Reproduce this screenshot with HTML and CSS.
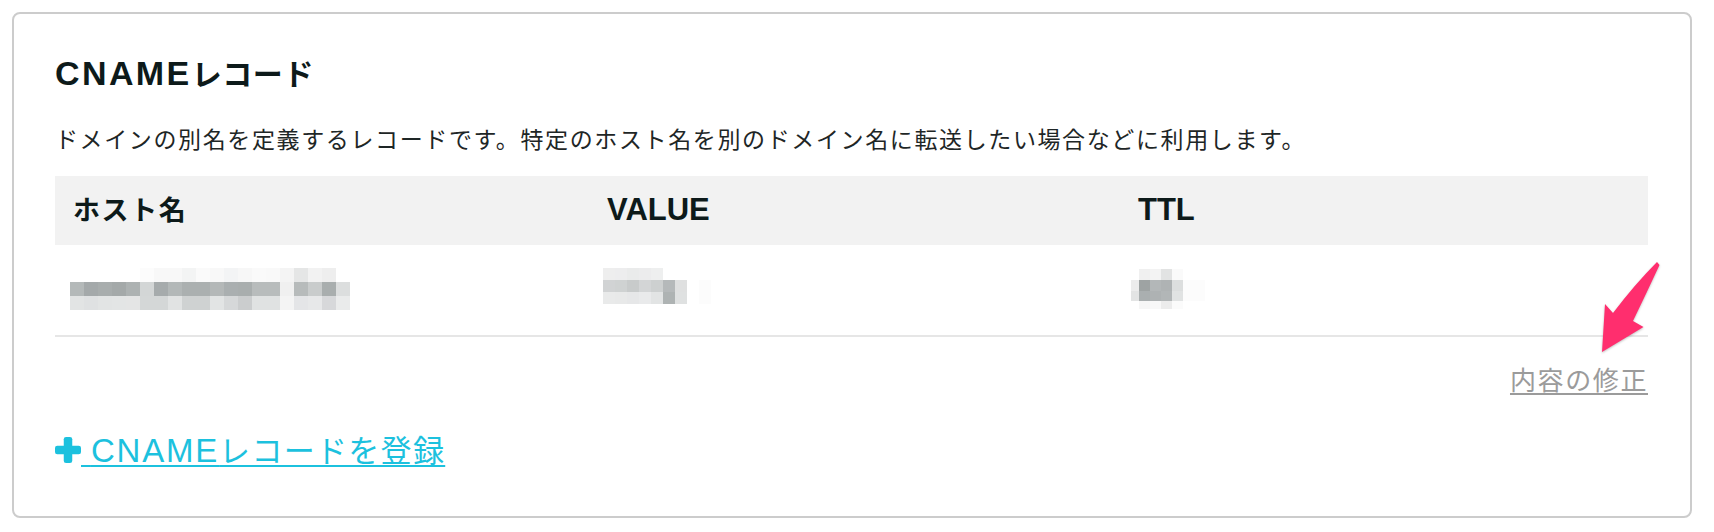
FILE: index.html
```html
<!DOCTYPE html>
<html lang="ja">
<head>
<meta charset="utf-8">
<title>CNAMEレコード</title>
<link rel="stylesheet" href="styles.css">
</head>
<body>
<div class="page">
  <section class="card">
    <h2 class="title"><span class="lat">CNAME</span>レコード</h2>
    <p class="desc">ドメインの別名を定義するレコードです。特定のホスト名を別のドメイン名に転送したい場合などに利用します。</p>

    <div class="table">
      <div class="row head">
        <div class="cell">ホスト名</div>
        <div class="cell"><span class="lat">VALUE</span></div>
        <div class="cell"><span class="lat">TTL</span></div>
      </div>
      <div class="row body">
        <div class="cell">
          <svg class="mosaic" width="290" height="44" viewBox="0 0 290 44">
            <g>
              <rect x="74" y="1" width="14" height="14" fill="#fcfcfc"/>
              <rect x="88" y="1" width="14" height="14" fill="#f8f8f8"/>
              <rect x="102" y="1" width="14" height="14" fill="#f8f8f8"/>
              <rect x="116" y="1" width="14" height="14" fill="#f3f4f4"/>
              <rect x="130" y="1" width="14" height="14" fill="#fafafa"/>
              <rect x="144" y="1" width="14" height="14" fill="#f8f8f8"/>
              <rect x="158" y="1" width="14" height="14" fill="#f3f4f5"/>
              <rect x="172" y="1" width="14" height="14" fill="#f7f7f7"/>
              <rect x="186" y="1" width="14" height="14" fill="#fafafa"/>
              <rect x="200" y="1" width="14" height="14" fill="#f9f9f9"/>
              <rect x="214" y="1" width="14" height="14" fill="#f4f4f4"/>
              <rect x="228" y="1" width="14" height="14" fill="#e5e6e6"/>
              <rect x="242" y="1" width="14" height="14" fill="#f2f2f2"/>
              <rect x="256" y="1" width="14" height="14" fill="#eeeeee"/>
            </g>
            <g>
              <rect x="4" y="15" width="14" height="14" fill="#b4b9b9"/>
              <rect x="18" y="15" width="14" height="14" fill="#a4a9aa"/>
              <rect x="32" y="15" width="14" height="14" fill="#a8adad"/>
              <rect x="46" y="15" width="14" height="14" fill="#a4a9a9"/>
              <rect x="60" y="15" width="14" height="14" fill="#adb2b2"/>
              <rect x="74" y="15" width="14" height="14" fill="#d3d6d6"/>
              <rect x="88" y="15" width="14" height="14" fill="#a6abac"/>
              <rect x="102" y="15" width="14" height="14" fill="#b3b8b8"/>
              <rect x="116" y="15" width="14" height="14" fill="#abb0b0"/>
              <rect x="130" y="15" width="14" height="14" fill="#abb0b0"/>
              <rect x="144" y="15" width="14" height="14" fill="#b4b8b8"/>
              <rect x="158" y="15" width="14" height="14" fill="#aaafb0"/>
              <rect x="172" y="15" width="14" height="14" fill="#a9aeae"/>
              <rect x="186" y="15" width="14" height="14" fill="#b8bcbc"/>
              <rect x="200" y="15" width="14" height="14" fill="#b8bcbc"/>
              <rect x="214" y="15" width="14" height="14" fill="#f0f0f0"/>
              <rect x="228" y="15" width="14" height="14" fill="#b7bbbb"/>
              <rect x="242" y="15" width="14" height="14" fill="#c9cccc"/>
              <rect x="256" y="15" width="14" height="14" fill="#a9aeae"/>
              <rect x="270" y="15" width="14" height="14" fill="#dcdede"/>
            </g>
            <g>
              <rect x="4" y="29" width="14" height="14" fill="#e2e4e4"/>
              <rect x="18" y="29" width="14" height="14" fill="#dfe1e2"/>
              <rect x="32" y="29" width="14" height="14" fill="#e2e4e4"/>
              <rect x="46" y="29" width="14" height="14" fill="#e3e5e5"/>
              <rect x="60" y="29" width="14" height="14" fill="#e4e5e5"/>
              <rect x="74" y="29" width="14" height="14" fill="#d4d7d7"/>
              <rect x="88" y="29" width="14" height="14" fill="#d4d7d7"/>
              <rect x="102" y="29" width="14" height="14" fill="#e1e3e3"/>
              <rect x="116" y="29" width="14" height="14" fill="#cfd2d2"/>
              <rect x="130" y="29" width="14" height="14" fill="#cfd2d2"/>
              <rect x="144" y="29" width="14" height="14" fill="#e2e4e4"/>
              <rect x="158" y="29" width="14" height="14" fill="#d6d8d9"/>
              <rect x="172" y="29" width="14" height="14" fill="#cbcdce"/>
              <rect x="186" y="29" width="14" height="14" fill="#e0e2e2"/>
              <rect x="200" y="29" width="14" height="14" fill="#e0e2e2"/>
              <rect x="214" y="29" width="14" height="14" fill="#f4f4f4"/>
              <rect x="228" y="29" width="14" height="14" fill="#e4e5e7"/>
              <rect x="242" y="29" width="14" height="14" fill="#e7e8e9"/>
              <rect x="256" y="29" width="14" height="14" fill="#d7d8da"/>
              <rect x="270" y="29" width="14" height="14" fill="#eaebeb"/>
            </g>
          </svg>
        </div>
        <div class="cell">
          <svg class="mosaic" width="120" height="44" viewBox="0 0 120 44">
            <g>
              <rect x="3" y="1" width="12" height="12" fill="#eeeeee"/>
              <rect x="15" y="1" width="12" height="12" fill="#ededee"/>
              <rect x="27" y="1" width="12" height="12" fill="#eaebeb"/>
              <rect x="39" y="1" width="12" height="12" fill="#ececed"/>
              <rect x="51" y="1" width="12" height="12" fill="#eeefef"/>
            </g>
            <g>
              <rect x="3" y="13" width="12" height="12" fill="#d1d3d4"/>
              <rect x="15" y="13" width="12" height="12" fill="#cfd2d2"/>
              <rect x="27" y="13" width="12" height="12" fill="#c8cbcb"/>
              <rect x="39" y="13" width="12" height="12" fill="#d3d5d6"/>
              <rect x="51" y="13" width="12" height="12" fill="#cdd0d0"/>
              <rect x="63" y="13" width="12" height="12" fill="#b5b9ba"/>
              <rect x="75" y="13" width="12" height="12" fill="#dfe0e0"/>
              <rect x="99" y="13" width="12" height="24" fill="#fcfcfc"/>
            </g>
            <g>
              <rect x="3" y="25" width="12" height="12" fill="#e9eaea"/>
              <rect x="15" y="25" width="12" height="12" fill="#e8e9e9"/>
              <rect x="27" y="25" width="12" height="12" fill="#e6e7e8"/>
              <rect x="39" y="25" width="12" height="12" fill="#e9eaeb"/>
              <rect x="51" y="25" width="12" height="12" fill="#e2e4e4"/>
              <rect x="63" y="25" width="12" height="12" fill="#aeb3b3"/>
              <rect x="75" y="25" width="12" height="12" fill="#dfe1e1"/>
            </g>
          </svg>
        </div>
        <div class="cell">
          <svg class="mosaic" width="80" height="44" viewBox="0 0 80 44">
            <g>
              <rect x="8" y="2" width="11" height="11" fill="#f0f0f0"/>
              <rect x="19" y="2" width="11" height="11" fill="#f3f3f3"/>
              <rect x="30" y="2" width="11" height="11" fill="#e2e3e3"/>
              <rect x="41" y="2" width="11" height="11" fill="#fafafa"/>
            </g>
            <g>
              <rect x="0" y="13" width="8" height="11" fill="#ececec"/>
              <rect x="8" y="13" width="11" height="11" fill="#9ea3a3"/>
              <rect x="19" y="13" width="11" height="11" fill="#b3b7b8"/>
              <rect x="30" y="13" width="11" height="11" fill="#afb3b4"/>
              <rect x="41" y="13" width="11" height="11" fill="#dcdede"/>
              <rect x="52" y="13" width="22" height="21" fill="#fcfcfc"/>
            </g>
            <g>
              <rect x="0" y="24" width="8" height="10" fill="#e3e4e4"/>
              <rect x="8" y="24" width="11" height="10" fill="#aaafb0"/>
              <rect x="19" y="24" width="11" height="10" fill="#aeb2b3"/>
              <rect x="30" y="24" width="11" height="10" fill="#b2b6b7"/>
              <rect x="41" y="24" width="11" height="10" fill="#e1e3e3"/>
            </g>
            <g>
              <rect x="8" y="34" width="11" height="8" fill="#f6f6f6"/>
              <rect x="19" y="34" width="11" height="8" fill="#f8f8f8"/>
              <rect x="30" y="34" width="11" height="8" fill="#ececec"/>
              <rect x="41" y="34" width="11" height="8" fill="#fbfbfb"/>
            </g>
          </svg>
        </div>
      </div>
    </div>

    <div class="edit-line">
      <a class="edit" href="#">内容の修正</a>
    </div>

    <div class="add-line">
      <a class="add" href="#"><svg class="plus" width="26" height="26" viewBox="0 0 26 26"><rect x="8.75" y="0" width="8.5" height="26" rx="2.3" fill="#1cc1de"/><rect x="0" y="8.75" width="26" height="8.5" rx="2.3" fill="#1cc1de"/></svg><span class="add-text"> <span class="lat">CNAME</span>レコードを登録</span></a>
    </div>

    <svg class="arrow" width="70" height="100" viewBox="0 0 70 100">
      <path d="M62 4 L64.5 7 Q52 34 38 63 L48.5 69 L7 94 L10 46 L18 55 Q40 26 62 4 Z" fill="#ff2e6e"/>
    </svg>
  </section>
</div>
</body>
</html>
```

FILE: styles.css
```css
html, body {
  margin: 0;
  padding: 0;
  background: #ffffff;
}

body {
  font-family: "Liberation Sans", "Noto Sans CJK JP", sans-serif;
  color: #1c2424;
}

.page {
  padding: 12px 22px 14px 12px;
}

.card {
  position: relative;
  box-sizing: border-box;
  height: 506px;
  border: 2px solid #cccccc;
  border-radius: 8px;
  padding: 39px 42px 0 41px;
  background: #ffffff;
}

.title {
  margin: 0;
  font-size: 30px;
  line-height: 40px;
  font-weight: bold;
  letter-spacing: 0.6px;
  color: #0d1a1a;
}

.title .lat {
  font-size: 34px;
  letter-spacing: 2.4px;
}

.desc {
  margin: 29px 0 0;
  font-size: 23px;
  line-height: 32px;
  letter-spacing: 1.62px;
  color: #1e2626;
}

.table {
  margin-top: 20px;
}

.row {
  display: grid;
  grid-template-columns: 534px 531px 1fr;
}

.row.head {
  height: 69px;
  background: #f2f2f2;
  align-items: center;
}

.row.head .cell {
  padding-left: 18px;
  font-size: 27px;
  line-height: 36px;
  font-weight: bold;
  letter-spacing: 1.6px;
  color: #0d1a1a;
}

.row.head .lat {
  font-size: 31px;
  letter-spacing: 0;
}

.row.body {
  height: 90px;
  border-bottom: 2px solid #e6e6e6;
}

.row.body .cell {
  padding: 22px 0 0 11px;
}

.mosaic {
  display: block;
}

.edit-line {
  margin-top: 26px;
  text-align: right;
  line-height: 36px;
}

.edit {
  font-size: 26px;
  letter-spacing: 1.6px;
  color: #9b9b9b;
  text-decoration: underline;
  text-decoration-thickness: 2px;
  text-underline-offset: 3px;
}

.add-line {
  margin-top: 28px;
  line-height: 40px;
}

.add {
  font-size: 31px;
  letter-spacing: 1.3px;
  color: #1cc1de;
  text-decoration: none;
}

.add-text {
  text-decoration: underline;
  text-decoration-thickness: 2px;
  text-underline-offset: 3px;
}

.add .lat {
  font-size: 33px;
  letter-spacing: 1.8px;
}

.plus {
  vertical-align: -1px;
}

.arrow {
  position: absolute;
  left: 1581px;
  top: 244px;
  filter: drop-shadow(0 1px 1px rgba(0, 0, 0, 0.25));
}
```
